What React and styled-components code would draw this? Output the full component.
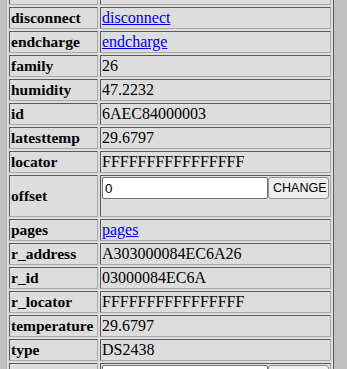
import React from "react";
import styled, { createGlobalStyle } from "styled-components";

const GlobalStyle = createGlobalStyle`
  html, body {
    margin: 0;
    padding: 0;
    overflow: hidden;
    background: #c0c0c0;
  }
  body {
    font-family: "Liberation Serif", "Times New Roman", serif;
    font-size: 16px;
    color: #000;
  }
`;

const PropTable = styled.table`
  margin: -20px 0 0 6px;
  border-collapse: separate;
  border-spacing: 2px;
  border: 1px solid;
  border-color: #b4b4b4 #5e5e5e #5e5e5e #b4b4b4;
  background: #dddddd;
`;

const Cell = styled.td`
  padding: 1px;
  border: 1px solid;
  border-color: #5a5a5a #a8a8a8 #a8a8a8 #5a5a5a;
  line-height: 18px;
  vertical-align: middle;
  white-space: nowrap;
`;

const NameCell = styled(Cell)`
  width: 85px;
  font-size: 15.5px;
  font-weight: bold;
  text-align: left;
`;

const ValueCell = styled(Cell)`
  width: 227px;
  text-align: left;
`;

const PropLink = styled.a`
  color: #0000ee;
  text-decoration: underline;
`;

const WriteForm = styled.form`
  display: flex;
  margin: 0 0 16px 0;
`;

const ValueInput = styled.input`
  box-sizing: border-box;
  width: 166px;
  height: 22px;
  margin: 0;
  padding: 1px 2px;
  border: 1px solid #767676;
  border-radius: 2px;
  background: #fff;
  font-family: "Liberation Sans", Arial, sans-serif;
  font-size: 13.33px;
  color: #000;
`;

const SubmitButton = styled.button`
  box-sizing: border-box;
  width: 61px;
  height: 22px;
  margin: 0;
  padding: 1px 4px;
  border: 1px solid #8f8f8f;
  border-radius: 3px;
  background: #efefef;
  font-family: "Liberation Sans", Arial, sans-serif;
  font-size: 12.5px;
  color: #000;
`;

const rows = [
  { name: "date", value: "0" },
  { name: "disconnect", link: true },
  { name: "endcharge", link: true },
  { name: "family", value: "26" },
  { name: "humidity", value: "47.2232" },
  { name: "id", value: "6AEC84000003" },
  { name: "latesttemp", value: "29.6797" },
  { name: "locator", value: "FFFFFFFFFFFFFFFF" },
  { name: "offset", input: "0" },
  { name: "pages", link: true },
  { name: "r_address", value: "A303000084EC6A26" },
  { name: "r_id", value: "03000084EC6A" },
  { name: "r_locator", value: "FFFFFFFFFFFFFFFF" },
  { name: "temperature", value: "29.6797" },
  { name: "type", value: "DS2438" },
  { name: "udate", input: "0" },
];

function Value({ row }) {
  if (row.link) {
    return <PropLink href={`#${row.name}`}>{row.name}</PropLink>;
  }
  if (row.input !== undefined) {
    return (
      <WriteForm onSubmit={(e) => e.preventDefault()}>
        <ValueInput type="text" name={row.name} defaultValue={row.input} />
        <SubmitButton type="submit">CHANGE</SubmitButton>
      </WriteForm>
    );
  }
  return row.value;
}

export default function App() {
  return (
    <>
      <GlobalStyle />
      <PropTable>
        <tbody>
          {rows.map((row) => (
            <tr key={row.name}>
              <NameCell>{row.name}</NameCell>
              <ValueCell>
                <Value row={row} />
              </ValueCell>
            </tr>
          ))}
        </tbody>
      </PropTable>
    </>
  );
}
